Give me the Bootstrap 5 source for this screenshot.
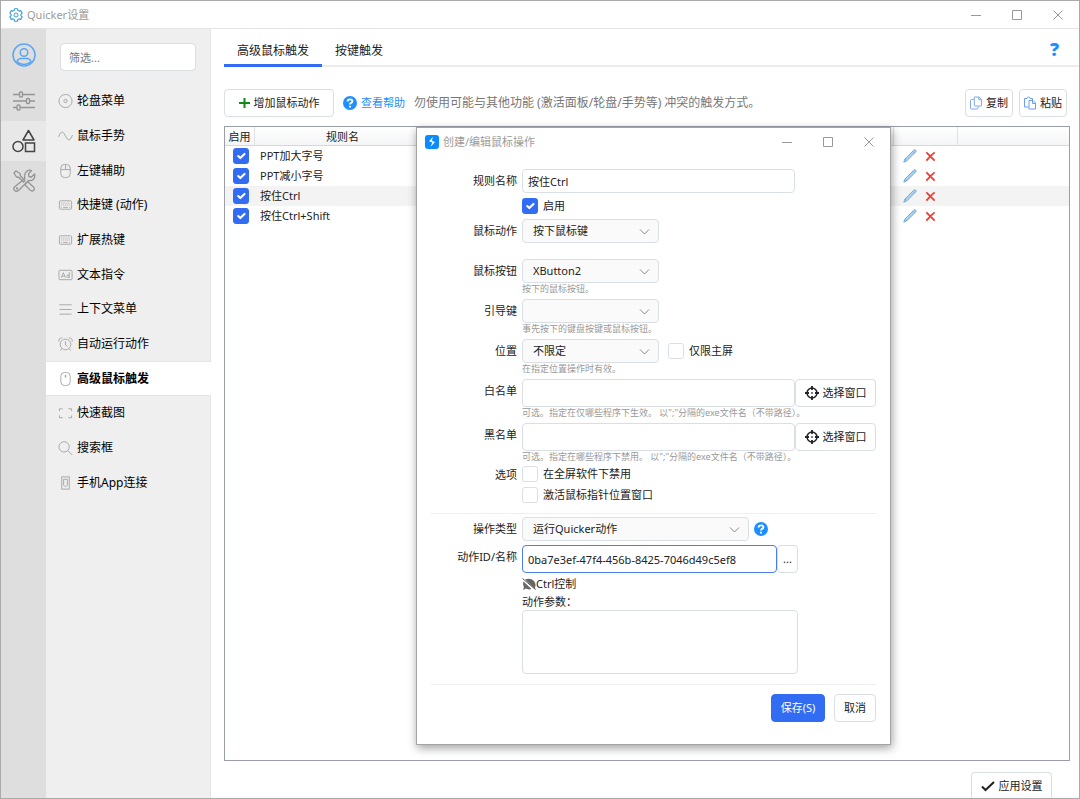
<!DOCTYPE html>
<html lang="zh-CN">
<head>
<meta charset="utf-8">
<meta name="viewport" content="width=device-width, initial-scale=1">
<title>Quicker设置</title>
<link href="https://cdn.jsdelivr.net/npm/bootstrap@5.3.0/dist/css/bootstrap.min.css" rel="stylesheet">
<style>
:root{--accent:#326cf3;--sky:#1e8fff;--line:#dadfe6;--muted-ink:#9b9b9b}
body{font-family:"Noto Sans","Noto Sans CJK SC",sans-serif;font-size:11px;line-height:16px;color:#222}
svg{display:block;flex:none;fill:none;stroke:currentColor}
.app-window{height:100vh;border:1px solid #aaa;overflow:hidden}
.title-bar{height:28px;border-bottom:1px solid #e4e4e4;color:var(--muted-ink)}
.caption-set{gap:31px;padding-right:16px}
.caption-btn{border:0;background:none;padding:0;color:#999}
.rail{width:45px;background:#dedede;color:#949494}
.rail a{height:40px;color:inherit}
.rail a.account{height:52px;color:#5ba6f5}
.rail a.active{background:#e8e8e8;color:#444}
.side{width:165px;background:#efefef;border-right:1px solid #e4e4e4}
.side-filter{padding:14px 14px 0 14px}
.side-filter .form-control{height:28px;padding:0 8px}
.side-nav{height:416px;margin-top:13px;margin-right:-1px}
.side-nav a{flex:1 1 0;font-size:12px;color:#000;padding-left:12px;gap:4px;text-decoration:none}
.side-nav a svg{color:#a5a5a5}
.side-nav a.active{background:#fff;font-weight:700;box-shadow:inset 0 1px #e4e4e4,inset 0 -1px #e4e4e4}
.form-control,.form-select{font-size:11px;line-height:16px;border-color:var(--line);border-radius:4px;color:#222;min-height:0}
.form-control::placeholder{color:#777}
.form-select{height:24px;padding:0 24px 0 10px;background-color:#fafafa;background-position:right 8px center;background-size:11px 11px;
 background-image:url("data:image/svg+xml,%3Csvg xmlns='http://www.w3.org/2000/svg' viewBox='0 0 11 11'%3E%3Cpath fill='none' stroke='%23888' d='M1 3.500l4.500 4.500L10 3.500'/%3E%3C/svg%3E")}
.form-check-input{width:16px;height:16px;margin:0;border-color:var(--line);border-radius:2px;flex:none}
.form-check-input:checked{background-color:var(--accent);border-color:var(--accent)}
.btn{font-size:11px;line-height:16px;height:28px;padding:0 7px;border-radius:4px;border-color:var(--line);background:#fff;color:#222;display:inline-flex;align-items:center;justify-content:center;gap:4px;white-space:nowrap}
.btn-primary{background:var(--accent);border-color:var(--accent);color:#fff}
.tabs{height:38px;border-bottom:2px solid #ececec;margin-left:13px}
.tabs .nav-link{font-size:12px;color:#222;padding:8px 13px 0;height:38px;display:flex;align-items:center;border-bottom:3px solid transparent}
.tabs .nav-link.active{border-color:var(--accent)}
.help-mark{font:800 18px/20px "Open Sans",sans-serif;color:var(--sky);text-decoration:none;padding:4px 20px 0 0}
.tools{padding:22px 12px 9px 13px}
.tools .lead-btn{width:110px}
.tools .clip-btn{width:48px;padding:0}
.hint-text{font-size:12px;color:#777;margin-left:9px}
.help-link{color:var(--sky);text-decoration:none;margin-left:9px}
.rule-box{margin:0 9px 0 13px;border:1px solid #9a9ea8}
.rule-table{table-layout:fixed;border-collapse:separate;border-spacing:0;font-size:11px;line-height:16px;margin:0;color:#222}
.rule-table th{font-weight:400;height:19px;padding:0;text-align:center;background:linear-gradient(#fff,#f4f5f6);border-bottom:1px solid #d5d7da;border-right:1px solid #dfe1e4}
.rule-table th:nth-child(2),.rule-table th:last-child{border-right:0}
.rule-table td{height:20px;padding:0 5px;border:0;background:transparent;vertical-align:middle}
.rule-table tr.current td{background:#f3f3f3}
.rule-table .form-check-input{display:block;margin-left:3px}
.c-on{width:30px}.c-name{width:175px}.c-act{width:64px}.c-rest{width:111px}
.icon-btn{border:0;background:none;padding:0}
.foot{padding:11px 27px 0 0}
.foot .btn{height:26px;width:81px;border-bottom:0;border-radius:4px 4px 0 0}
.dialog{left:205px;top:98px;width:475px;height:618px;background:#fff;border:1px solid #a4a4a4;box-shadow:1px 3px 9px rgba(0,0,0,.38)}
.dialog-title{height:28px;color:var(--muted-ink)}
.dialog-body{padding:13px 14px 0 14px}
.field{display:grid;grid-template-columns:86px 1fr;column-gap:5px;margin-top:4px}
.field>.name{text-align:right;line-height:24px}
.field .form-control{padding:0 5px}
.field .w-name{width:273px;height:24px}
.field .w-list{width:273px;height:28px}
.field .w-id{width:255px;height:28px;border-color:#4b7cf5}
.field .w-area{width:276px;height:64px;resize:none}
.field .w-sel{width:137px}
.field .w-type{width:227px}
.note{font-size:9px;line-height:12px;color:#999;white-space:nowrap}
.tick{display:flex;align-items:center;gap:5px;height:21px}
.tick-slim{height:18px}
.more-btn{width:21px}
.field .more-btn{padding:0}
.rule-line{border-top:1px solid #efefef;margin:10px 0 3px}
.actions{gap:9px;padding-top:6px}
.actions .btn{padding:0}
.w-save{width:54px}.w-cancel{width:42px}
</style>
</head>
<body>
<svg width="0" height="0" class="position-absolute" aria-hidden="true">
 <symbol id="min" viewBox="0 0 10 10"><path d="M0 5.500h10"/></symbol>
 <symbol id="max" viewBox="0 0 10 10"><path d="M.5.5h9v9h-9z"/></symbol>
 <symbol id="cls" viewBox="0 0 10 10"><path d="M.5.5l9 9M9.500.5l-9 9"/></symbol>
 <symbol id="kbd" viewBox="0 0 16 16"><rect x="1.500" y="3.500" width="13" height="9" rx="1"/><path stroke-dasharray="1 1" d="M3 6h10M3.500 8h9.500M3 10.500h1.500M12 10.500h1.500"/><path d="M5.500 10.500h5"/></symbol>
 <symbol id="pen" viewBox="0 0 14 14"><path fill="#a9d2f5" stroke="#6ba6dc" stroke-width=".9" d="M.8 13.200l1-3L10.800 1.200q1.200-.9 2 0 .7.800-.1 1.700L3.600 12z"/><path stroke="#6ba6dc" stroke-width=".7" d="M9.800 2.300l1.800 1.900M2 10l1.900 1.900"/></symbol>
 <symbol id="del" viewBox="0 0 12 12"><path stroke="#f23c32" stroke-width="2" d="M1.500 1.500q3 3 9 9M10.500 1.500q-4 3-9 9"/></symbol>
 <symbol id="ask" viewBox="0 0 14 14"><circle cx="7" cy="7" r="7" fill="#1e8fff" stroke="none"/><path stroke="#fff" stroke-width="1.900" d="M4.600 5.400q0-2 2.400-2t2.400 1.900q0 1-1.300 1.600-1.100.5-1.100 1.500M7 9.700v1.900"/></symbol>
 <symbol id="aim" viewBox="0 0 14 14"><circle cx="7" cy="7" r="5" stroke-width="1.500"/><path stroke-width="1.800" d="M7 0v4M7 10v4M0 7h4M10 7h4"/><path d="M7 6.300v1.400M6.300 7h1.400"/></symbol>
</svg>

<div class="app-window d-flex flex-column bg-white">
 <header class="title-bar d-flex align-items-center flex-shrink-0">
  <svg class="ms-2 me-1" width="14" height="14" viewBox="0 0 14 14"><path stroke="#3c9fd6" stroke-width="1.100" stroke-linejoin="round" d="M5.600.7h2.800l.5 1.800 1.100.6 1.800-.5 1.400 2.400L11.900 6.300v1.400l1.300 1.300-1.400 2.400-1.800-.5-1.100.6-.5 1.800H5.600l-.5-1.800-1.100-.6-1.800.5L.8 9l1.300-1.300V6.300L.8 5l1.400-2.400 1.800.5 1.100-.6z"/><circle cx="7" cy="7" r="2" stroke="#3c9fd6"/></svg>
  <span>Quicker设置</span>
  <div class="caption-set ms-auto d-flex">
   <button class="caption-btn" aria-label="最小化"><svg width="10" height="10"><use href="#min"/></svg></button>
   <button class="caption-btn" aria-label="最大化"><svg width="10" height="10"><use href="#max"/></svg></button>
   <button class="caption-btn" aria-label="关闭"><svg width="10" height="10"><use href="#cls"/></svg></button>
  </div>
 </header>

 <div class="d-flex flex-fill overflow-hidden">
  <nav class="rail flex-shrink-0 d-flex flex-column" aria-label="分类">
   <a href="#" class="account d-flex align-items-center justify-content-center" aria-label="账户"><svg width="24" height="24" viewBox="0 0 24 24" stroke-width="1.500"><circle cx="12" cy="12" r="11"/><circle cx="12" cy="9.500" r="3.800"/><path d="M5 18.500q1-3 4-3h6q3 0 4 3-3 3-7 3t-7-3z"/></svg></a>
   <a href="#" class="d-flex align-items-center justify-content-center" aria-label="常规"><svg width="24" height="20" viewBox="0 0 24 20" stroke-width="1.300"><path d="M1 3.500h6.500M10.500 3.500H23M1 10h13.500M17.500 10H23M1 16.500h4M8 16.500h15"/><rect x="7.500" y="1" width="3" height="5" rx="1"/><rect x="14.500" y="7.500" width="3" height="5" rx="1"/><rect x="5" y="14" width="3" height="5" rx="1"/></svg></a>
   <a href="#" class="active d-flex align-items-center justify-content-center" aria-label="触发"><svg width="24" height="24" viewBox="0 0 24 24" stroke-width="1.500"><path stroke-linejoin="round" d="M16.500 1.500L22 11H11z"/><circle cx="6" cy="17.500" r="5"/><rect x="13.500" y="14" width="9" height="8.500"/></svg></a>
   <a href="#" class="d-flex align-items-center justify-content-center" aria-label="工具"><svg width="24" height="24" viewBox="0 0 24 24" stroke-width="1.300" stroke-linejoin="round"><path d="M2 4l2-2 4 2.500.5 2.500L13 11.500 11.500 13 7 8.500 4.500 8z"/><path d="M14 14l2-1 6 5.500q1 1.500-.3 2.800-1.400 1.400-2.900.3L13 16z"/><path d="M13 9.500q-1.500-4 1.500-7 2.500-2 5-1L16.500 5 17 7.500l2.500.5 3-3q1 3-1 5.200-2 2-5 1.300L6.500 21.500q-2 1.500-3.800 0-1.700-1.800 0-3.800z"/><circle cx="5" cy="19.500" r=".5"/></svg></a>
  </nav>

  <aside class="side flex-shrink-0">
   <div class="side-filter"><input class="form-control" type="text" placeholder="筛选..." aria-label="筛选"></div>
   <nav class="side-nav d-flex flex-column" aria-label="设置项">
    <a href="#" class="d-flex align-items-center"><svg width="15" height="16" viewBox="0 0 16 16"><circle cx="8" cy="8" r="7"/><circle cx="8" cy="8" r="1.800"/></svg>轮盘菜单</a>
    <a href="#" class="d-flex align-items-center"><svg width="15" height="16" viewBox="0 0 16 16"><path d="M.5 9Q4-1 8 8t7.500-1"/></svg>鼠标手势</a>
    <a href="#" class="d-flex align-items-center"><svg width="15" height="16" viewBox="0 0 16 16"><rect x="3" y="1" width="10" height="14" rx="4"/><path d="M3 6.500h10M8 1v5.500"/></svg>左键辅助</a>
    <a href="#" class="d-flex align-items-center"><svg width="15" height="16"><use href="#kbd"/></svg>快捷键 (动作)</a>
    <a href="#" class="d-flex align-items-center"><svg width="15" height="16"><use href="#kbd"/></svg>扩展热键</a>
    <a href="#" class="d-flex align-items-center"><svg width="15" height="16" viewBox="0 0 16 16"><rect x="1" y="3" width="14" height="10" rx="1"/><path d="M3.500 11L5.700 5.500 8 11M4.300 9.300h2.900M12 5v6M12 8.200q-2.600-1-2.600 1.300T12 10"/></svg>文本指令</a>
    <a href="#" class="d-flex align-items-center"><svg width="15" height="16" viewBox="0 0 16 16"><path d="M1.500 3.500h13M1.500 8.500h13M1.500 13.500h13"/></svg>上下文菜单</a>
    <a href="#" class="d-flex align-items-center"><svg width="15" height="16" viewBox="0 0 16 16"><circle cx="8" cy="8.500" r="5.700"/><path d="M8 5v4l2 1.500M1 5.500Q0 1.500 4.500 1.500M15 5.500Q16 1.500 11.500 1.500M4 13l-1.500 2M12 13l1.500 2"/></svg>自动运行动作</a>
    <a href="#" class="active d-flex align-items-center"><svg width="15" height="16" viewBox="0 0 16 16"><rect x="3" y="1" width="10" height="14" rx="4"/><path stroke-width="1.500" d="M8 3.500v3"/></svg>高级鼠标触发</a>
    <a href="#" class="d-flex align-items-center"><svg width="15" height="16" viewBox="0 0 16 16"><path d="M1.500 6V3.500H5M11 3.500h3.500V6M14.500 10.500V13H11M5 13H1.500v-2.500"/></svg>快速截图</a>
    <a href="#" class="d-flex align-items-center"><svg width="15" height="16" viewBox="0 0 16 16"><circle cx="6.500" cy="6.800" r="5.500"/><path d="M10.500 10.800l4.500 4.500"/></svg>搜索框</a>
    <a href="#" class="d-flex align-items-center"><svg width="15" height="16" viewBox="0 0 16 16"><rect x="4" y="1.500" width="8" height="13"/><path d="M6 4h4v6.500L8 12l-2-1.500z"/></svg>手机App连接</a>
   </nav>
  </aside>

  <main class="position-relative flex-fill d-flex flex-column">
   <div class="tabs d-flex flex-shrink-0">
    <ul class="nav flex-nowrap">
     <li class="nav-item"><a class="nav-link active" href="#">高级鼠标触发</a></li>
     <li class="nav-item"><a class="nav-link" href="#">按键触发</a></li>
    </ul>
    <a class="help-mark ms-auto d-flex align-items-center" href="#">?</a>
   </div>

   <div class="tools d-flex align-items-center">
    <button class="btn lead-btn"><svg width="11" height="12" viewBox="0 0 11 12"><path stroke="#12891a" stroke-width="2" d="M5.500 1v10M0 6h11"/></svg>增加鼠标动作</button>
    <a class="help-link d-flex align-items-center gap-1" href="#"><svg width="14" height="14"><use href="#ask"/></svg>查看帮助</a>
    <span class="hint-text">勿使用可能与其他功能 (激活面板/轮盘/手势等) 冲突的触发方式。</span>
    <div class="ms-auto d-flex" style="gap:6px">
     <button class="btn clip-btn"><svg width="12" height="14" viewBox="0 0 12 14"><path stroke="#7fa9f0" stroke-linejoin="round" d="M4.500 1h4.500l2.500 2.500V9.500q0 .5-.5.5H5q-.7 0-.7-.7V1.700Q4.300 1 5 1M4 3.500H1.500Q.5 3.500.5 4.500v7.500q0 1 1 1h5.500q1 0 1-1v-1.500M8.800 1v2.700h2.700"/></svg>复制</button>
     <button class="btn clip-btn"><svg width="12" height="14" viewBox="0 0 12 14"><path stroke="#6d9bee" stroke-linejoin="round" d="M5 4.500h4l2.500 2.500v6H5zM4.500 11H.5V2.500H3q0-1.500 1.500-1.500T6 2.500h2.500v2M8.500 4.500V7.500h3"/></svg>粘贴</button>
    </div>
   </div>

   <section class="rule-box flex-fill" aria-label="规则">
    <table class="table rule-table">
     <colgroup><col class="c-on"><col class="c-name"><col><col class="c-act"><col class="c-rest"></colgroup>
     <thead><tr><th scope="col">启用</th><th scope="col">规则名</th><th></th><th></th><th></th></tr></thead>
     <tbody>
      <tr><td><input class="form-check-input" type="checkbox" checked aria-label="启用"></td><td>PPT加大字号</td><td></td><td><div class="d-flex align-items-center gap-2 ps-1"><button class="icon-btn" aria-label="编辑"><svg width="14" height="14"><use href="#pen"/></svg></button><button class="icon-btn" aria-label="删除"><svg width="11" height="11"><use href="#del"/></svg></button></div></td><td></td></tr>
      <tr><td><input class="form-check-input" type="checkbox" checked aria-label="启用"></td><td>PPT减小字号</td><td></td><td><div class="d-flex align-items-center gap-2 ps-1"><button class="icon-btn" aria-label="编辑"><svg width="14" height="14"><use href="#pen"/></svg></button><button class="icon-btn" aria-label="删除"><svg width="11" height="11"><use href="#del"/></svg></button></div></td><td></td></tr>
      <tr class="current"><td><input class="form-check-input" type="checkbox" checked aria-label="启用"></td><td>按住Ctrl</td><td></td><td><div class="d-flex align-items-center gap-2 ps-1"><button class="icon-btn" aria-label="编辑"><svg width="14" height="14"><use href="#pen"/></svg></button><button class="icon-btn" aria-label="删除"><svg width="11" height="11"><use href="#del"/></svg></button></div></td><td></td></tr>
      <tr><td><input class="form-check-input" type="checkbox" checked aria-label="启用"></td><td>按住Ctrl+Shift</td><td></td><td><div class="d-flex align-items-center gap-2 ps-1"><button class="icon-btn" aria-label="编辑"><svg width="14" height="14"><use href="#pen"/></svg></button><button class="icon-btn" aria-label="删除"><svg width="11" height="11"><use href="#del"/></svg></button></div></td><td></td></tr>
     </tbody>
    </table>
   </section>

   <div class="foot d-flex justify-content-end flex-shrink-0">
    <button class="btn"><svg width="14" height="12" viewBox="0 0 14 12"><path stroke-width="2" d="M1 6.500l3.500 3.500L13 2"/></svg>应用设置</button>
   </div>

   <div class="dialog position-absolute" role="dialog" aria-label="创建/编辑鼠标操作">
    <div class="dialog-title d-flex align-items-center">
     <svg class="ms-2 me-1" width="14" height="14" viewBox="0 0 14 14"><rect width="14" height="14" rx="3" fill="#0a8bff" stroke="none"/><path fill="#fff" stroke="none" d="M7.800 2L4 6.300l3.300 1.200L5.500 12 10 7 7 5.800z"/></svg>
     <span>创建/编辑鼠标操作</span>
     <div class="caption-set ms-auto d-flex">
      <button class="caption-btn" aria-label="最小化"><svg width="10" height="10"><use href="#min"/></svg></button>
      <button class="caption-btn" aria-label="最大化"><svg width="10" height="10"><use href="#max"/></svg></button>
      <button class="caption-btn" aria-label="关闭"><svg width="10" height="10"><use href="#cls"/></svg></button>
     </div>
    </div>
    <form class="dialog-body">
     <div class="field mt-0"><label class="name" for="f-name">规则名称</label><input id="f-name" class="form-control w-name" value="按住Ctrl"></div>
     <div class="field"><span></span><label class="tick tick-slim"><input class="form-check-input" type="checkbox" checked>启用</label></div>
     <div class="field"><label class="name" for="f-act">鼠标动作</label><select id="f-act" class="form-select w-sel"><option>按下鼠标键</option></select></div>
     <div class="field mt-3"><label class="name" for="f-btn">鼠标按钮</label><div><select id="f-btn" class="form-select w-sel"><option>XButton2</option></select><div class="note">按下的鼠标按钮。</div></div></div>
     <div class="field"><label class="name" for="f-lead">引导键</label><div><select id="f-lead" class="form-select w-sel"><option></option></select><div class="note">事先按下的键盘按键或鼠标按钮。</div></div></div>
     <div class="field"><label class="name" for="f-pos">位置</label><div><div class="d-flex align-items-center" style="gap:9px"><select id="f-pos" class="form-select w-sel"><option>不限定</option></select><label class="d-flex align-items-center" style="gap:5px"><input class="form-check-input" type="checkbox">仅限主屏</label></div><div class="note">在指定位置操作时有效。</div></div></div>
     <div class="field mt-0 pt-1"><label class="name" for="f-white">白名单</label><div><div class="d-flex"><input id="f-white" class="form-control w-list"><button type="button" class="btn flex-fill"><svg width="14" height="14"><use href="#aim"/></svg>选择窗口</button></div><div class="note">可选。指定在仅哪些程序下生效。 以";"分隔的exe文件名（不带路径）。</div></div></div>
     <div class="field"><label class="name" for="f-black">黑名单</label><div><div class="d-flex"><input id="f-black" class="form-control w-list"><button type="button" class="btn flex-fill"><svg width="14" height="14"><use href="#aim"/></svg>选择窗口</button></div><div class="note">可选。指定在哪些程序下禁用。 以";"分隔的exe文件名（不带路径）。</div></div></div>
     <div class="field mt-0"><span class="name">选项</span><div><label class="tick"><input class="form-check-input" type="checkbox">在全屏软件下禁用</label><label class="tick"><input class="form-check-input" type="checkbox">激活鼠标指针位置窗口</label></div></div>
     <div class="rule-line mt-2"></div>
     <div class="field mt-0"><label class="name" for="f-type">操作类型</label><div class="d-flex align-items-center" style="gap:5px"><select id="f-type" class="form-select w-type"><option>运行Quicker动作</option></select><a href="#" aria-label="帮助"><svg width="14" height="14"><use href="#ask"/></svg></a></div></div>
     <div class="field"><label class="name" for="f-id">动作ID/名称</label><div class="d-flex"><input id="f-id" class="form-control w-id" value="0ba7e3ef-47f4-456b-8425-7046d49c5ef8"><button type="button" class="btn more-btn">...</button></div></div>
     <div class="field mt-0"><span></span><div>
      <div class="tick gap-0"><svg width="14" height="12" viewBox="0 0 14 12"><path fill="#666" stroke="none" d="M3 1.500Q8.500-.5 12 3q2.500 3 1 6l.5 2.500zM1.500 3.500l8 7.500Q7 12 4 10.500L1 12l1-3Q.5 6.500 1.500 3.500z"/><path stroke="#555" d="M.5.500l13 11"/></svg>Ctrl控制</div>
      <label class="d-block" for="f-arg">动作参数：</label><textarea id="f-arg" class="form-control w-area"></textarea></div></div>
     <div class="rule-line"></div>
     <div class="actions d-flex justify-content-end"><button type="submit" class="btn btn-primary w-save">保存(S)</button><button type="button" class="btn w-cancel">取消</button></div>
    </form>
   </div>
  </main>
 </div>
</div>
<script src="https://cdn.jsdelivr.net/npm/bootstrap@5.3.0/dist/js/bootstrap.bundle.min.js"></script>
</body>
</html>
